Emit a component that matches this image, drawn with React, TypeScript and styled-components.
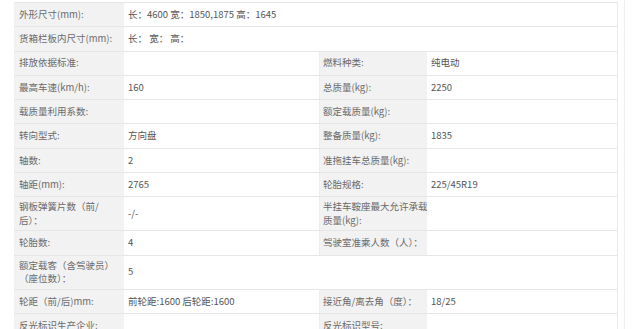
import React from 'react';
import styled, { createGlobalStyle } from 'styled-components';

const GlobalStyle = createGlobalStyle`
  html, body {
    margin: 0;
    padding: 0;
    background: #ffffff;
  }
  body {
    font-family: "Noto Sans CJK SC", "Noto Sans", sans-serif;
  }
`;

const Page = styled.div`
  width: 607px;
  padding: 2px 3px 0 14px;
  border-right: 1px solid #efefef;
  height: 327px;
  overflow: hidden;
  box-sizing: content-box;
`;

const Table = styled.div`
  width: 603px;
  border-top: 1px solid #e6e6e6;
  border-right: 1px solid #e9e9e9;
`;

const Row = styled.div`
  display: grid;
  grid-template-columns: 110px 195px 108px 190px;
  border-bottom: 1px solid #e6e6e6;
`;

const Cell = styled.div<{ $span?: boolean }>`
  grid-column: ${(p) => (p.$span ? 'span 3' : 'auto')};
  display: flex;
  align-items: center;
  min-height: 23.3px;
  padding: 3px 4px;
  box-sizing: border-box;
  font-size: 9.5px;
  line-height: 13.5px;
  white-space: nowrap;
`;

const Label = styled(Cell)<{ $right?: boolean }>`
  background: #f2f2f2;
  color: #6a6a6a;
  padding-left: ${(p) => (p.$right ? '3px' : '5px')};
  border-left: ${(p) => (p.$right ? '1px solid #ececec' : 'none')};
`;

const Value = styled(Cell)`
  background: #ffffff;
  color: #555555;
`;

type Spec = {
  label: React.ReactNode;
  value?: React.ReactNode;
  label2?: React.ReactNode;
  value2?: React.ReactNode;
};

const rows: Spec[] = [
  { label: '外形尺寸(mm):', value: '长：4600 宽：1850,1875 高：1645' },
  { label: '货箱栏板内尺寸(mm):', value: '长：  宽：  高：' },
  { label: '排放依据标准:', value: '', label2: '燃料种类:', value2: '纯电动' },
  { label: '最高车速(km/h):', value: '160', label2: '总质量(kg):', value2: '2250' },
  { label: '载质量利用系数:', value: '', label2: '额定载质量(kg):', value2: '' },
  { label: '转向型式:', value: '方向盘', label2: '整备质量(kg):', value2: '1835' },
  { label: '轴数:', value: '2', label2: '准拖挂车总质量(kg):', value2: '' },
  { label: '轴距(mm):', value: '2765', label2: '轮胎规格:', value2: '225/45R19' },
  {
    label: (
      <span>
        钢板弹簧片数（前/
        <br />
        后）：
      </span>
    ),
    value: '-/-',
    label2: (
      <span>
        半挂车鞍座最大允许承载
        <br />
        质量(kg):
      </span>
    ),
    value2: '',
  },
  { label: '轮胎数:', value: '4', label2: '驾驶室准乘人数（人）：', value2: '' },
  {
    label: (
      <span>
        额定载客（含驾驶员）
        <br />
        （座位数）：
      </span>
    ),
    value: '5',
  },
  {
    label: '轮距（前/后)mm:',
    value: '前轮距:1600 后轮距:1600',
    label2: '接近角/离去角（度）：',
    value2: '18/25',
  },
  { label: '反光标识生产企业:', value: '', label2: '反光标识型号:', value2: '' },
];

export default function App() {
  return (
    <>
      <GlobalStyle />
      <Page>
        <Table>
          {rows.map((r, i) => (
            <Row key={i}>
              <Label>{r.label}</Label>
              {r.label2 === undefined ? (
                <Value $span>{r.value}</Value>
              ) : (
                <>
                  <Value>{r.value}</Value>
                  <Label $right>{r.label2}</Label>
                  <Value>{r.value2}</Value>
                </>
              )}
            </Row>
          ))}
        </Table>
      </Page>
    </>
  );
}
